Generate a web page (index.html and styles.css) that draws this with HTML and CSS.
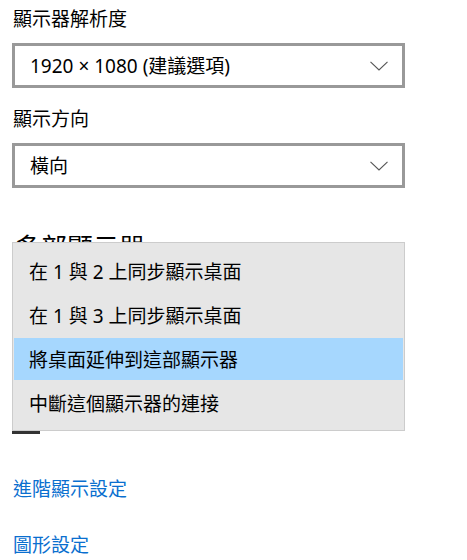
FILE: index.html
```html
<!DOCTYPE html>
<html lang="zh-Hant">
<head>
<meta charset="utf-8">
<link rel="stylesheet" href="styles.css">
</head>
<body>
<main class="page">
  <div class="label">顯示器解析度</div>
  <div class="select">
    <span class="select-text">1920 × 1080 (建議選項)</span>
    <svg class="chev" width="18" height="10" viewBox="0 0 18 10"><path d="M0.5 0.8 L9 9 L17.5 0.8" fill="none" stroke="#555" stroke-width="1.1"/></svg>
  </div>
  <div class="label label-2">顯示方向</div>
  <div class="select">
    <span class="select-text">橫向</span>
    <svg class="chev" width="18" height="10" viewBox="0 0 18 10"><path d="M0.5 0.8 L9 9 L17.5 0.8" fill="none" stroke="#555" stroke-width="1.1"/></svg>
  </div>
  <section class="multi">
    <h2 class="heading">多部顯示器</h2>
    <div class="under-select"></div>
    <ul class="menu">
      <li class="menu-item">在 1 與 2 上同步顯示桌面</li>
      <li class="menu-item">在 1 與 3 上同步顯示桌面</li>
      <li class="menu-item is-selected">將桌面延伸到這部顯示器</li>
      <li class="menu-item">中斷這個顯示器的連接</li>
    </ul>
  </section>
  <a class="link link-1" href="#">進階顯示設定</a>
  <a class="link link-2" href="#">圖形設定</a>
</main>
</body>
</html>
```
FILE: styles.css
```css
* { box-sizing: border-box; }
html, body { margin: 0; padding: 0; background: #fff; }
body {
  font-family: "Noto Sans", "Noto Sans CJK TC", sans-serif;
  color: #000;
  width: 467px;
  height: 560px;
  overflow: hidden;
}
.page {
  display: flex;
  flex-direction: column;
  align-items: flex-start;
  padding: 4px 0 0 12px;
}
.label {
  font-size: 19px;
  line-height: 30px;
  height: 30px;
  margin-left: 1px;
}
.label-2 { margin-top: 16px; }
.select {
  width: 393px;
  height: 45px;
  border: 3px solid #999;
  margin-top: 9px;
  display: flex;
  align-items: center;
  justify-content: space-between;
  padding: 0 14px 0 15px;
}
.select-text {
  font-size: 19px;
  line-height: 24px;
}
.chev { display: block; }
.multi {
  position: relative;
  height: 287px;
  width: 400px;
}
.heading {
  margin: 41px 0 0 3px;
  font-size: 26px;
  font-weight: 400;
  line-height: 36px;
}
.under-select {
  position: absolute;
  left: 0;
  top: 218px;
  width: 28px;
  height: 28px;
  border: 3px solid #333;
}
.menu {
  position: absolute;
  left: 0;
  top: 54px;
  width: 393px;
  margin: 0;
  padding: 7px 1px 6px;
  list-style: none;
  background: #e6e6e6;
  border: 1px solid #cccccc;
  display: flex;
  flex-direction: column;
  gap: 2px;
}
.menu-item {
  height: 42px;
  padding-left: 15px;
  display: flex;
  align-items: center;
  font-size: 19px;
  color: #000;
}
.menu-item.is-selected { background: #a6d7fe; }
.link {
  font-size: 19px;
  line-height: 28px;
  color: #0a6fcf;
  text-decoration: none;
  margin-left: 1px;
}
.link-1 { margin-top: 0; }
.link-2 { margin-top: 28px; }
```
